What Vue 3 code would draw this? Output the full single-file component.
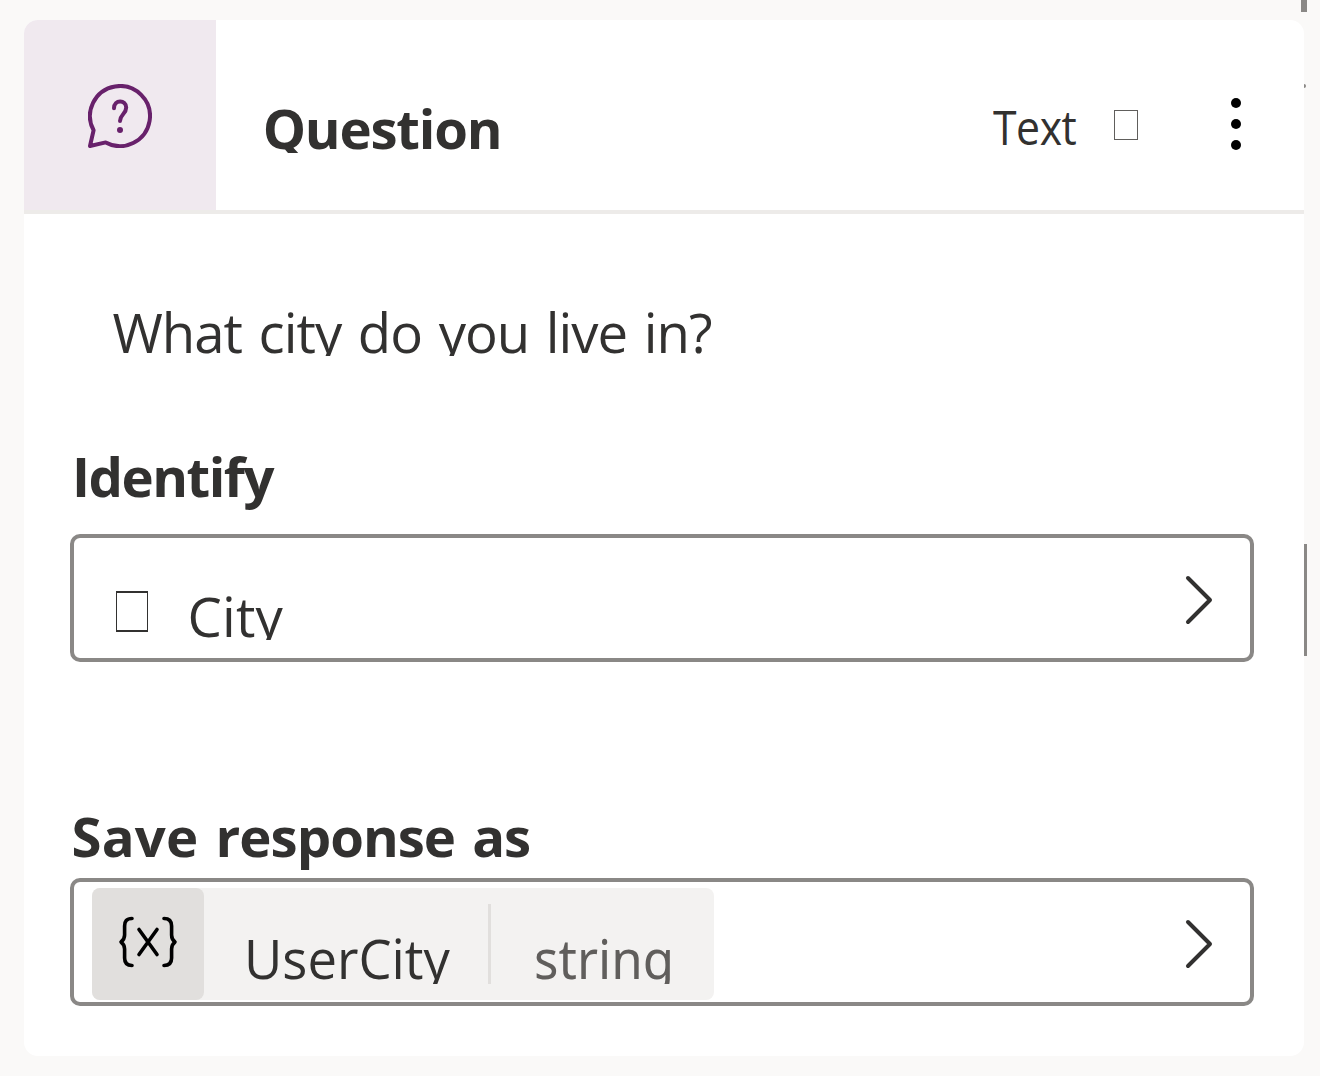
<script setup>
const title = 'Question'
const message = 'What city do you live in?'
const entity = 'City'
const variable = { name: 'UserCity', type: 'string' }
</script>

<template>
  <main class="canvas">
    <i class="handle top"></i>
    <i class="handle dot"></i>
    <i class="handle side"></i>

    <article class="card">
      <header class="head">
        <div class="tile">
          <svg width="64" height="64" viewBox="0 0 64 64" fill="none" stroke="#68216b" stroke-width="4" stroke-linecap="round" stroke-linejoin="round">
            <path d="M5.6 46.3A30 30 0 1 1 17.7 58.4L2 62Z" />
            <path d="M26 24.2c0-9 12.2-8.8 12.2-.7C38.2 30 32 30.5 32 37" />
            <circle cx="32" cy="46" r="3" fill="#68216b" stroke="none" />
          </svg>
        </div>
        <h1 class="title">{{ title }}</h1>
        <span class="kind">Text</span>
        <i class="glyph small"></i>
        <svg class="more" width="10" height="52" viewBox="0 0 10 52">
          <circle cx="5" cy="5" r="5" />
          <circle cx="5" cy="26" r="5" />
          <circle cx="5" cy="47" r="5" />
        </svg>
      </header>

      <section class="body">
        <p class="message">{{ message }}</p>

        <h2 class="label identify">Identify</h2>
        <div class="field">
          <i class="glyph large"></i>
          <span class="entity">{{ entity }}</span>
          <svg class="chevron" width="28" height="50" viewBox="0 0 28 50">
            <path d="M3 3L25 25L3 47" />
          </svg>
        </div>

        <h2 class="label save"><span class="lead">Save</span> response as</h2>
        <div class="field">
          <div class="chip">
            <div class="var">
              <svg width="60" height="52" viewBox="0 0 60 52" fill="none" stroke="#000" stroke-width="3.6" stroke-linecap="round" stroke-linejoin="round">
                <path d="M14 2.5C8.5 2.5 6.6 5.5 6.6 10V19C6.6 23 5 24.5 3 26C5 27.5 6.6 29 6.6 33V42C6.6 46.5 8.5 49.5 14 49.5" />
                <path d="M46 2.5C51.5 2.5 53.6 5.5 53.6 10V19C53.6 23 55 24.5 57 26C55 27.5 53.6 29 53.6 33V42C53.6 46.5 51.5 49.5 46 49.5" />
                <path d="M21 13.5L39 38.5M39 13.5L21 38.5" />
              </svg>
            </div>
            <span class="name">{{ variable.name }}</span>
            <i class="divider"></i>
            <span class="type">{{ variable.type }}</span>
          </div>
          <svg class="chevron" width="28" height="50" viewBox="0 0 28 50">
            <path d="M3 3L25 25L3 47" />
          </svg>
        </div>
      </section>
    </article>
  </main>
</template>

<style>
body {
  margin: 0;
  background: #faf9f8;
}
</style>

<style scoped>
* {
  box-sizing: border-box;
}
.canvas {
  position: relative;
  width: 1320px;
  height: 1076px;
  padding: 20px 16px 20px 24px;
  overflow: hidden;
  background: #faf9f8;
  color: #323130;
  font: 54.5px "Open Sans", sans-serif;
}
.handle {
  position: absolute;
  background: #8a8886;
}
.handle.top {
  left: 1301px;
  top: 0;
  width: 6px;
  height: 12px;
}
.handle.dot {
  left: 1303px;
  top: 84px;
  width: 3px;
  height: 4px;
  border-radius: 0 2px 2px 0;
}
.handle.side {
  left: 1304px;
  top: 544px;
  width: 3px;
  height: 112px;
}
.card {
  position: relative;
  height: 1036px;
  border-radius: 14px;
  overflow: hidden;
  background: #fff;
}
.head {
  display: flex;
  align-items: flex-start;
  height: 194px;
  border-bottom: 4px solid #edebe9;
}
.tile {
  display: flex;
  justify-content: center;
  flex: none;
  width: 192px;
  height: 190px;
  padding-top: 64px;
  background: #f0e9ef;
}
.title {
  margin: 81px 0 0 46.7px;
  height: 52px;
  overflow: hidden;
  font-size: 54.5px;
  font-weight: 700;
  line-height: 54px;
  letter-spacing: -1.2px;
}
.kind {
  width: 84px;
  margin: 76px 0 0 auto;
  font-size: 47.5px;
  line-height: 61px;
  letter-spacing: -0.5px;
  transform: scaleX(0.9);
  transform-origin: 0 0;
}
.glyph {
  flex: none;
  border: 1px solid #605e5c;
}
.glyph.small {
  width: 24px;
  height: 30px;
  margin: 90px 0 0 37px;
}
.glyph.large {
  width: 32px;
  height: 41px;
  margin: 53px 0 0 42px;
  border-color: #323130;
  border-width: 2px 1px;
}
.more {
  flex: none;
  margin: 78px 63px 0 93px;
}
.body {
  padding: 92px 50px 0 46px;
}
.message {
  height: 50px;
  margin: 0 0 0 42.5px;
  overflow: hidden;
  line-height: 52px;
  letter-spacing: -1px;
  word-spacing: 3.5px;
  white-space: nowrap;
}
.label {
  height: 70px;
  font-size: 54.5px;
  font-weight: 700;
  line-height: 72px;
}
.identify {
  margin: 84px 0 24px 2px;
  letter-spacing: -1.5px;
}
.save {
  margin: 138px 0 8px 1.5px;
  letter-spacing: -1px;
  word-spacing: 4px;
}
.lead {
  letter-spacing: 0.2px;
}
.field {
  display: flex;
  align-items: flex-start;
  height: 128px;
  border: 4px solid #8a8886;
  border-radius: 10px;
}
.entity {
  height: 50px;
  margin: 52px 0 0 39.5px;
  overflow: hidden;
  line-height: 52px;
  letter-spacing: 0.2px;
}
.chevron {
  flex: none;
  margin: 37px 37px 0 auto;
  fill: none;
  stroke: #323130;
  stroke-width: 4;
  stroke-linecap: round;
  stroke-linejoin: round;
}
.chip {
  display: flex;
  align-items: flex-start;
  width: 622px;
  height: 112px;
  margin: 6px 0 0 18px;
  border-radius: 8px;
  background: #f3f2f1;
}
.var {
  display: flex;
  justify-content: center;
  flex: none;
  width: 112px;
  height: 112px;
  padding-top: 28px;
  border-radius: 8px;
  background: #e1dfdd;
}
.name,
.type {
  flex: none;
  height: 54px;
  margin-top: 42px;
  overflow: hidden;
  line-height: 56px;
  transform-origin: 0 0;
}
.name {
  width: 220px;
  margin-left: 39.5px;
  transform: scaleX(0.965);
}
.divider {
  width: 3px;
  height: 80px;
  margin: 16px 0 0 24.5px;
  background: #e1dfdd;
}
.type {
  margin-left: 42.5px;
  color: #605e5c;
  font-family: "Noto Sans", sans-serif;
  transform: scaleX(0.937);
}
</style>
